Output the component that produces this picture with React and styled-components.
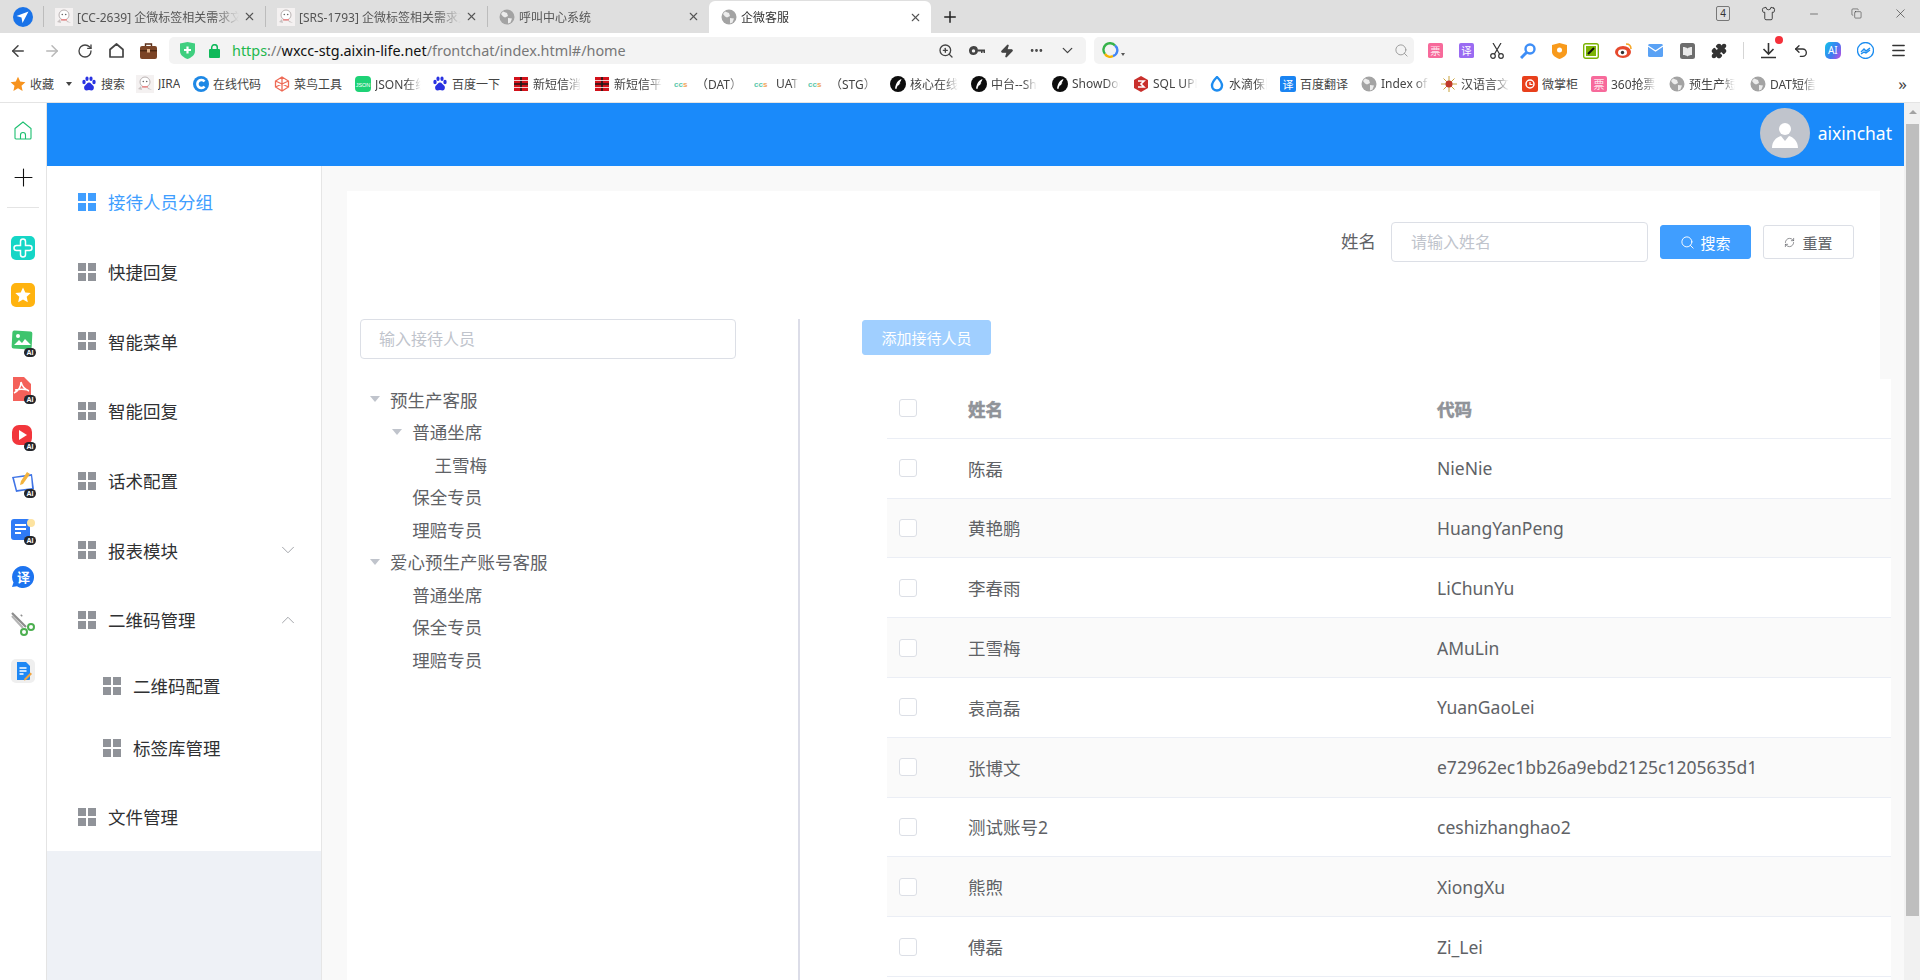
import React from "react";
import styled, { createGlobalStyle } from "styled-components";
import {
  ArrowLeft,
  ArrowRight,
  RotateCw,
  Plus,
  X,
  ZoomIn,
  Zap,
  Ellipsis,
  ChevronDown,
  ChevronUp,
  Search,
  RefreshCw,
  Puzzle,
  Undo2,
  Menu,
  Minus,
  Copy,
  Shirt,
} from "lucide-react";

const sans = `"Noto Sans", "Noto Sans CJK SC", sans-serif`;

const GlobalStyle = createGlobalStyle`
  html, body {
    margin: 0;
    padding: 0;
    height: 980px;
    overflow: hidden;
    background: #fff;
    font-family: ${sans};
  }
  * { box-sizing: border-box; }
`;

/* ---------- small drawings used by the browser chrome ---------- */

const Globe = () => (
  <svg width="16" height="16" viewBox="0 0 16 16">
    <circle cx="8" cy="8" r="7.5" fill="#a3a3a3" />
    <path d="M4 2.5l4 1.5 1 3-3 1.5-2-1L2 5zM9 9l4 .5-1.5 4-2.5 1z" fill="#ececec" />
  </svg>
);

const Bird = () => (
  <svg width="18" height="18" viewBox="0 0 18 18">
    <rect width="18" height="18" fill="#f4f1f1" />
    <ellipse cx="9" cy="7" rx="5" ry="5" fill="#fff" stroke="#b9b2b2" />
    <path d="M5 11l-3 3 4 1zM11 12l5 3-4-1z" fill="#c9c2c2" />
    <rect x="6" y="11" width="6" height="1.6" fill="#e78d8d" />
    <circle cx="7.3" cy="6.5" r=".8" fill="#666" />
    <circle cx="10.7" cy="6.5" r=".8" fill="#666" />
  </svg>
);

const Baidu = () => (
  <svg width="16" height="16" viewBox="0 0 16 16" fill="#2932e1">
    <ellipse cx="3" cy="6" rx="1.7" ry="2.2" />
    <ellipse cx="6" cy="2.8" rx="1.6" ry="2.2" />
    <ellipse cx="10" cy="2.8" rx="1.6" ry="2.2" />
    <ellipse cx="13" cy="6" rx="1.7" ry="2.2" />
    <path d="M8 6.5c2 0 2.5 2 4 3 1.6 1.2 1 5-1.5 5-1 0-1.6-.4-2.5-.4s-1.500.4-2.500.4C3 14.500 2.400 10.700 4 9.500c1.500-1 2-3 4-3z" />
  </svg>
);

const CodeC = () => (
  <svg width="16" height="16" viewBox="0 0 16 16">
    <circle cx="8" cy="8" r="8" fill="#1e88e5" />
    <path d="M11.500 5.500A4 4 0 1 0 11.500 10.500" fill="none" stroke="#fff" strokeWidth="2.600" />
  </svg>
);

const Runoob = () => (
  <svg width="16" height="16" viewBox="0 0 16 16" fill="none" stroke="#ee6a55" strokeWidth="1.300">
    <path d="M8 1l6.500 4v6L8 15l-6.500-4V5zM8 1v14M1.500 5l13 6M14.500 5l-13 6" />
  </svg>
);

const Json = () => (
  <svg width="16" height="16" viewBox="0 0 16 16">
    <rect width="16" height="16" rx="4" fill="#1ed276" />
    <text x="8" y="10.500" fontSize="5.500" fill="#fff" textAnchor="middle" fontFamily="Liberation Sans">JSON</text>
  </svg>
);

const Sms = () => (
  <svg width="16" height="16" viewBox="0 0 16 16">
    <rect x="1" y="1" width="14" height="14" fill="#d2121b" />
    <path d="M1 8h14M8 1v14" stroke="#1b1b1b" strokeWidth="1.600" />
    <path d="M1 4.500h14M1 11.500h14" stroke="#fff" strokeWidth=".8" />
  </svg>
);

const Ccs = () => (
  <svg width="18" height="10" viewBox="0 0 18 10">
    <text x="0" y="8" fontSize="8" fontWeight="700" fill="#5cc8ab" fontFamily="Liberation Sans">cc</text>
    <text x="9" y="8" fontSize="8" fontWeight="700" fill="#f0a55a" fontFamily="Liberation Sans">s</text>
  </svg>
);

const Quill = () => (
  <svg width="16" height="16" viewBox="0 0 16 16">
    <circle cx="8" cy="8" r="8" fill="#0d0d0d" />
    <path d="M11.500 3C8 4 6 7 5 12.500l1.400.4c.3-1.400.8-2.600 1.400-3.400l2-.8-1-.5 1.700-1.200-.8-.5C10.600 5.500 11.200 4.400 11.500 3z" fill="#fff" />
  </svg>
);

const SqlUp = () => (
  <svg width="16" height="16" viewBox="0 0 16 16">
    <path d="M8 0l7 4v8l-7 4-7-4V4z" fill="#c9302c" />
    <path d="M5 5h6l-3 3 3 3H5" fill="none" stroke="#fff" strokeWidth="1.600" />
  </svg>
);

const Drop = () => (
  <svg width="16" height="16" viewBox="0 0 16 16">
    <path d="M8 1c3 3 5 5.500 5 8.500a5 5 0 0 1-10 0C3 6.500 5 4 8 1z" fill="none" stroke="#1d8cf0" strokeWidth="2.400" />
  </svg>
);

const Fanyi = ({ bg = "#1a84f2", r = 2, size = 16 }) => (
  <svg width={size} height={size} viewBox="0 0 16 16">
    <rect width="16" height="16" rx={r} fill={bg} />
    <text x="8" y="12.500" fontSize="11" fill="#fff" textAnchor="middle" fontFamily="Noto Sans CJK SC">译</text>
  </svg>
);

const Piao = ({ size = 16 }) => (
  <svg width={size} height={size} viewBox="0 0 16 16">
    <rect width="16" height="16" rx="2" fill="#f76a9b" />
    <text x="8" y="12.500" fontSize="11" fill="#fff" fillOpacity=".85" textAnchor="middle" fontFamily="Noto Sans CJK SC">票</text>
  </svg>
);

const Burst = () => (
  <svg width="16" height="16" viewBox="0 0 16 16">
    <path d="M8 0v16M0 8h16M2.500 2.500l11 11M13.500 2.500l-11 11" stroke="#c9a23a" strokeWidth="1" />
    <circle cx="8" cy="8" r="3.500" fill="#c0392b" />
  </svg>
);

const Zhanggui = () => (
  <svg width="16" height="16" viewBox="0 0 16 16">
    <rect width="16" height="16" rx="2" fill="#e8401c" />
    <circle cx="8" cy="8" r="4" fill="none" stroke="#fff" strokeWidth="1.500" />
    <path d="M8 6v2.500h2.500" fill="none" stroke="#fff" strokeWidth="1.200" />
  </svg>
);

function StarIcon() {
  return (
    <svg width="16" height="16" viewBox="0 0 16 16">
      <path d="M8 .8l2.200 4.800 5.200.6-3.900 3.500 1.100 5.200L8 12.300 3.400 14.900l1.100-5.200L.6 6.200l5.200-.6z" fill="#f7931e" />
    </svg>
  );
}

const bookmarks = [
  { w: 71, label: "收藏", icon: <StarIcon />, caret: true },
  { w: 55, label: "搜索", icon: <Baidu /> },
  { w: 57, label: "JIRA", icon: <Bird /> },
  { w: 81, label: "在线代码", icon: <CodeC /> },
  { w: 81, label: "菜鸟工具", icon: <Runoob /> },
  { w: 77, label: "JSON在线", icon: <Json />, fade: 46 },
  { w: 81, label: "百度一下", icon: <Baidu /> },
  { w: 81, label: "新短信消息", icon: <Sms />, fade: 48 },
  { w: 80, label: "新短信平台", icon: <Sms />, fade: 48 },
  { w: 80, label: "（DAT）", icon: <Ccs />, fade: 56 },
  { w: 54, label: "UAT", icon: <Ccs />, fade: 26 },
  { w: 82, label: "（STG）", icon: <Ccs />, fade: 56 },
  { w: 81, label: "核心在线", icon: <Quill />, fade: 48 },
  { w: 81, label: "中台--ShowDoc", icon: <Quill />, fade: 46 },
  { w: 81, label: "ShowDoc", icon: <Quill />, fade: 48 },
  { w: 76, label: "SQL UPDATE", icon: <SqlUp />, fade: 44 },
  { w: 71, label: "水滴保险", icon: <Drop />, fade: 38 },
  { w: 81, label: "百度翻译", icon: <Fanyi /> },
  { w: 80, label: "Index of /", icon: <Globe />, fade: 48 },
  { w: 81, label: "汉语言文字", icon: <Burst />, fade: 48 },
  { w: 69, label: "微掌柜", icon: <Zhanggui /> },
  { w: 78, label: "360抢票", icon: <Piao />, fade: 46 },
  { w: 81, label: "预生产短信", icon: <Globe />, fade: 46 },
  { w: 80, label: "DAT短信", icon: <Globe />, fade: 46 },
];

const tabs = [
  { title: "[CC-2639] 企微标签相关需求文档", icon: <Bird /> },
  { title: "[SRS-1793] 企微标签相关需求文档", icon: <Bird /> },
  { title: "呼叫中心系统", icon: <Globe /> },
  { title: "企微客服", icon: <Globe />, active: true },
];

/* ---------- rail apps ---------- */

const AppTile = ({ bg, children }) => (
  <svg width="24" height="24" viewBox="0 0 24 24">
    <rect width="24" height="24" rx="5" fill={bg} />
    {children}
  </svg>
);

const railApps = [
  {
    key: "cross",
    node: (
      <AppTile bg="#15d6c6">
        <path d="M9.500 5.500a2.500 2.500 0 0 1 5 0V9.500h4a2.500 2.500 0 0 1 0 5H14.500v4a2.500 2.500 0 0 1-5 0V14.500h-4a2.500 2.500 0 0 1 0-5H9.500z" fill="none" stroke="#fff" strokeWidth="1.500" />
      </AppTile>
    ),
  },
  {
    key: "star",
    node: (
      <AppTile bg="#ffb30f">
        <path d="M12 4.500l2.300 5 5.400.6-4 3.700 1.100 5.400L12 16.500l-4.800 2.700 1.100-5.400-4-3.700 5.400-.6z" fill="#fff" />
      </AppTile>
    ),
  },
  {
    key: "image",
    ai: true,
    node: (
      <svg width="24" height="24" viewBox="0 0 24 24">
        <rect x="1" y="1" width="20" height="18" rx="2" fill="#3ec46d" transform="rotate(3 11 10)" />
        <circle cx="7" cy="6" r="2" fill="#fff" />
        <path d="M3 15l5-5 3 3 3-4 6 6z" fill="#fff" />
      </svg>
    ),
  },
  {
    key: "pdf",
    ai: true,
    node: (
      <svg width="24" height="24" viewBox="0 0 24 24">
        <path d="M2 0h11l7 7v15a2 2 0 0 1-2 2H2z" fill="#f4615a" />
        <path d="M10 5c1 4 3 7 8 9M10 5c0 5-3 9-7 11M4 13c4-1 9-1 13 0" fill="none" stroke="#fff" strokeWidth="1.500" />
      </svg>
    ),
  },
  {
    key: "video",
    ai: true,
    node: (
      <svg width="24" height="24" viewBox="0 0 24 24">
        <rect x="1" y="1" width="20" height="20" rx="7" fill="#f2363c" />
        <path d="M8 6l8 5-8 5z" fill="#fff" />
      </svg>
    ),
  },
  {
    key: "note",
    ai: true,
    node: (
      <svg width="24" height="24" viewBox="0 0 24 24">
        <path d="M1 6l20-3 2 15-18 3z" fill="#3f74e6" />
        <path d="M3 7l17-2 1 12-15 2z" fill="#fff" />
        <path d="M16 1l3 2-7 10-3 1 1-4z" fill="#f3b33c" />
      </svg>
    ),
  },
  {
    key: "doc",
    ai: true,
    node: (
      <svg width="24" height="24" viewBox="0 0 24 24">
        <rect x="0" y="1" width="19" height="21" rx="3" fill="#2f7bf6" />
        <path d="M4 7h11M4 11h11M4 15h6" stroke="#fff" strokeWidth="1.800" />
        <circle cx="20" cy="5" r="4" fill="#fde3a0" />
      </svg>
    ),
  },
  {
    key: "translate",
    node: (
      <svg width="24" height="24" viewBox="0 0 24 24">
        <path d="M12 1a11 11 0 1 1-6 20.200L1 22l1.500-4.500A11 11 0 0 1 12 1z" fill="#1d74f0" />
        <text x="12.500" y="17" fontSize="13" fontWeight="700" fill="#fff" textAnchor="middle" fontFamily="Noto Sans CJK SC">译</text>
      </svg>
    ),
  },
  {
    key: "scissors",
    node: (
      <svg width="24" height="24" viewBox="0 0 24 24">
        <path d="M1 1l14 14M11 3l-1 1" stroke="#8d8d8d" strokeWidth="2.200" />
        <path d="M1 4l11 12" stroke="#b5b5b5" strokeWidth="2.200" />
        <circle cx="13" cy="20" r="3" fill="none" stroke="#4caf50" strokeWidth="2" />
        <circle cx="20" cy="15" r="3" fill="none" stroke="#4caf50" strokeWidth="2" />
      </svg>
    ),
  },
  {
    key: "edit",
    node: (
      <AppTile bg="#efefef">
        <path d="M6 3h9l4 4v13a1 1 0 0 1-1 1H6z" fill="#1e88f5" />
        <path d="M8.500 9h7M8.500 12h7M8.500 15h4" stroke="#fff" strokeWidth="1.300" />
        <path d="M21 15l-6 6-2 .5.500-2 6-6z" fill="#f2a33c" />
      </AppTile>
    ),
  },
];

/* ---------- page data ---------- */

const menu = [
  { label: "接待人员分组", active: true },
  { label: "快捷回复" },
  { label: "智能菜单" },
  { label: "智能回复" },
  { label: "话术配置" },
  { label: "报表模块", arrow: "down" },
  { label: "二维码管理", arrow: "up" },
];

const tree = [
  { label: "预生产客服", level: 0, open: true },
  { label: "普通坐席", level: 1, open: true },
  { label: "王雪梅", level: 2 },
  { label: "保全专员", level: 1 },
  { label: "理赔专员", level: 1 },
  { label: "爱心预生产账号客服", level: 0, open: true },
  { label: "普通坐席", level: 1 },
  { label: "保全专员", level: 1 },
  { label: "理赔专员", level: 1 },
];

const people = [
  ["陈磊", "NieNie"],
  ["黄艳鹏", "HuangYanPeng"],
  ["李春雨", "LiChunYu"],
  ["王雪梅", "AMuLin"],
  ["袁高磊", "YuanGaoLei"],
  ["张博文", "e72962ec1bb26a9ebd2125c1205635d1"],
  ["测试账号2", "ceshizhanghao2"],
  ["熊煦", "XiongXu"],
  ["傅磊", "Zi_Lei"],
];

const App = () => {
  return (
    <Page>
      <GlobalStyle />
      <TabStrip>
        <Logo>
          <svg width="20" height="20" viewBox="0 0 20 20">
            <circle cx="10" cy="10" r="10" fill="#1a73e8" />
            <path d="M15.500 4.500L9.500 16l-1-5.500L3.500 9z" fill="#fff" />
          </svg>
        </Logo>
        {tabs.map((t) => (
          <Tab key={t.title} $active={t.active}>
            {t.icon}
            <TabTitle $active={t.active}>{t.title}</TabTitle>
            <X size={13} strokeWidth={2} color="#555" />
          </Tab>
        ))}
        <NewTab>
          <Plus size={18} strokeWidth={2} color="#222" />
        </NewTab>
        <WindowBtns>
          <CountBox>4</CountBox>
          <Shirt size={15} strokeWidth={1.3} color="#222" />
          <Minus size={12} strokeWidth={1.2} color="#333" />
          <Copy size={11} strokeWidth={1.2} color="#333" />
          <X size={15} strokeWidth={1} color="#333" />
        </WindowBtns>
      </TabStrip>

      <AddressRow>
        <NavBtns>
          <ArrowLeft size={18} strokeWidth={2} color="#444" />
          <ArrowRight size={18} strokeWidth={2} color="#b8b8b8" />
          <RotateCw size={16} strokeWidth={2} color="#444" />
          <svg width="15" height="15" viewBox="0 0 15 15" fill="none" stroke="#444" strokeWidth="1.700">
            <path d="M1 6.500L7.500 1 14 6.500V14H1z" strokeLinejoin="round" />
          </svg>
          <svg width="17" height="16" viewBox="0 0 17 16">
            <rect x="0" y="3" width="17" height="13" rx="2" fill="#7b4426" />
            <path d="M5.500 3V1h6v2" fill="none" stroke="#5b2f18" strokeWidth="1.400" />
            <rect x="0" y="7" width="17" height="1.400" fill="#4d2813" />
            <rect x="7" y="6" width="3" height="3.500" fill="#e2b48c" />
          </svg>
        </NavBtns>
        <UrlField>
          <svg width="15" height="17" viewBox="0 0 15 17">
            <path d="M0 1.500L7.500 0 15 1.500V9c0 4-3.500 6.500-7.500 8C3.500 15.500 0 13 0 9z" fill="#3fcf7f" />
            <path d="M7.500 4.500v7M4 8h7" stroke="#fff" strokeWidth="2.200" />
          </svg>
          <LockIcon width="11" height="14" viewBox="0 0 11 14">
            <rect y="5" width="11" height="9" rx="1" fill="#0fb95a" />
            <path d="M2.700 5.500V3.500a2.800 2.800 0 0 1 5.600 0v2" fill="none" stroke="#0fb95a" strokeWidth="1.500" />
          </LockIcon>
          <UrlText>
            <UrlScheme>https</UrlScheme>
            <UrlDim>://</UrlDim>
            <UrlHost>wxcc-stg.aixin-life.net</UrlHost>
            <UrlDim>/frontchat/index.html#/home</UrlDim>
          </UrlText>
          <UrlTools>
            <ZoomIn size={16} strokeWidth={2} color="#444" />
            <svg width="16" height="10" viewBox="0 0 16 10" fill="#444">
              <path d="M4.500 0a4.500 4.500 0 1 1-4.500 5A4.500 4.500 0 0 1 4.500 0zm0 3.200a1.600 1.600 0 1 0 0 3.400 1.600 1.600 0 0 0 0-3.400z" fillRule="evenodd" />
              <path d="M8.500 3.500H16V7h-1.500V5.500h-1V7H12V5.500H8.500z" />
            </svg>
            <Zap size={14} strokeWidth={2} color="#444" fill="#444" />
            <Ellipsis size={15} strokeWidth={2.500} color="#444" />
            <ChevronDown size={17} strokeWidth={1.800} color="#444" />
          </UrlTools>
        </UrlField>
        <SearchField>
          <svg width="17" height="17" viewBox="0 0 17 17">
            <path d="M13 3.500A6 6 0 0 0 3 12" fill="none" stroke="#36b24a" strokeWidth="2.400" />
            <path d="M3 12a6 6 0 0 0 8 2" fill="none" stroke="#f4b400" strokeWidth="2.400" />
            <path d="M11 14a6 6 0 0 0 2-10.500" fill="none" stroke="#4285f4" strokeWidth="2.400" />
          </svg>
          <MiniCaret />
          <Search size={15} strokeWidth={1.500} color="#999" />
        </SearchField>
        <Extensions>
          <Piao size={15} />
          <Fanyi bg="#9a6bf2" size={15} />
          <svg width="14" height="16" viewBox="0 0 14 16" fill="none" stroke="#333" strokeWidth="1.200">
            <path d="M3 0l6.500 11M11 0L4.500 11" />
            <circle cx="3" cy="13" r="2.300" />
            <circle cx="11" cy="13" r="2.300" />
          </svg>
          <svg width="16" height="16" viewBox="0 0 16 16" fill="none" stroke="#3e8ef7" strokeWidth="2.400">
            <circle cx="10" cy="6" r="4.500" />
            <path d="M6.500 9.500L1 15" strokeWidth="3" />
          </svg>
          <svg width="15" height="16" viewBox="0 0 15 16">
            <path d="M0 2l7.500-2L15 2v7c0 3.500-3.500 5.500-7.500 7C3.500 14.500 0 12.500 0 9z" fill="#f89a1c" />
            <circle cx="7.500" cy="7" r="2.500" fill="#fff" />
          </svg>
          <svg width="16" height="16" viewBox="0 0 16 16">
            <rect x=".7" y=".7" width="14.600" height="14.600" rx="2" fill="#fff" stroke="#7cb305" strokeWidth="1.400" />
            <rect x="3" y="3" width="10" height="10" fill="#7cb305" />
            <path d="M5 11l6-6" stroke="#111" strokeWidth="2" />
          </svg>
          <svg width="17" height="15" viewBox="0 0 17 15">
            <ellipse cx="8" cy="9" rx="8" ry="6" fill="#e6492d" />
            <ellipse cx="7.500" cy="9.500" rx="4.500" ry="3.200" fill="#fff" />
            <circle cx="7.500" cy="9.500" r="1.700" fill="#333" />
            <path d="M11 1c3 0 5 2 5 5" fill="none" stroke="#f5a623" strokeWidth="1.500" />
          </svg>
          <svg width="15" height="13" viewBox="0 0 15 13">
            <rect width="15" height="13" rx="1.500" fill="#5aa2f5" />
            <path d="M0 2l7.500 5L15 2" fill="none" stroke="#fff" strokeWidth="1.200" />
          </svg>
          <svg width="15" height="16" viewBox="0 0 15 16">
            <rect width="15" height="16" rx="2.500" fill="#6d6d6d" />
            <path d="M3 4c2 0 3.500.5 4.500 1.500C8.500 4.500 10 4 12 4v8c-2 0-3.500.5-4.500 1.500C6.500 12.500 5 12 3 12z" fill="#e9e9e9" />
          </svg>
          <Puzzle size={16} strokeWidth={2} color="#333" fill="#333" />
          <ExtSep />
          <DownloadWrap>
            <svg width="17" height="17" viewBox="0 0 17 17" fill="none" stroke="#333" strokeWidth="1.600">
              <path d="M8.500 1v10M3.500 7l5 5 5-5M1 15.500h15" />
            </svg>
            <RedDot />
          </DownloadWrap>
          <Undo2 size={16} strokeWidth={2} color="#333" />
          <AiIcon>AI</AiIcon>
          <svg width="17" height="17" viewBox="0 0 17 17">
            <circle cx="8.500" cy="8.500" r="8" fill="#fff" stroke="#1a8cf0" strokeWidth="1.300" />
            <path d="M4 10l3-3 2 2 4-3M4 12l3-2 2 1 4-3" fill="none" stroke="#1a8cf0" strokeWidth="1.400" />
          </svg>
          <Menu size={17} strokeWidth={2} color="#333" />
        </Extensions>
      </AddressRow>

      <BookmarkBar>
        {bookmarks.map((b) => (
          <Bookmark key={b.label + b.w} $w={b.w}>
            {b.icon}
            <BookmarkText $fade={b.fade}>{b.label}</BookmarkText>
            {b.caret && <BmCaret />}
          </Bookmark>
        ))}
        <More>»</More>
      </BookmarkBar>

      <Workspace>
        <Rail>
          <RailSlot>
            <svg width="18" height="19" viewBox="0 0 18 19" fill="none" stroke="#1cbf70" strokeWidth="1.100">
              <path d="M1 7.500L9 1l8 6.500V17a1 1 0 0 1-1 1H2a1 1 0 0 1-1-1z" />
              <path d="M6.500 18v-4a2.500 2.500 0 0 1 5 0v4" />
            </svg>
          </RailSlot>
          <RailSlot>
            <Plus size={29} strokeWidth={0.9} color="#111" />
          </RailSlot>
          <RailDivider />
          {railApps.map((a) => (
            <RailSlot key={a.key}>
              <RailIcon>
                {a.node}
                {a.ai && <AiBadge>AI</AiBadge>}
              </RailIcon>
            </RailSlot>
          ))}
        </Rail>

        <Main>
          <TopBar>
            <Avatar>
              <svg width="30" height="30" viewBox="0 0 30 30" fill="#fff">
                <circle cx="15" cy="9" r="6" />
                <path d="M2 28c0-7 5-11 9-12l4 5 4-5c4 1 9 5 9 12z" />
              </svg>
            </Avatar>
            <UserName>aixinchat</UserName>
          </TopBar>

          <Body>
            <Sidebar>
              <MenuList>
                {menu.map((m) => (
                  <MenuItem key={m.label} $active={m.active}>
                    <GridIcon />
                    <MenuLabel>{m.label}</MenuLabel>
                    {m.arrow === "down" && <ChevronDown size={22} strokeWidth={0.9} color="#909399" />}
                    {m.arrow === "up" && <ChevronUp size={22} strokeWidth={0.9} color="#909399" />}
                  </MenuItem>
                ))}
                <SubItem>
                  <GridIcon />
                  <MenuLabel>二维码配置</MenuLabel>
                </SubItem>
                <SubItem>
                  <GridIcon />
                  <MenuLabel>标签库管理</MenuLabel>
                </SubItem>
                <LastItem>
                  <GridIcon />
                  <MenuLabel>文件管理</MenuLabel>
                </LastItem>
              </MenuList>
            </Sidebar>

            <Content>
              <SearchPanel>
                <FormLabel>姓名</FormLabel>
                <NameInput placeholder="请输入姓名" />
                <PrimaryBtn>
                  <Search size={15} strokeWidth={1.500} />
                  搜索
                </PrimaryBtn>
                <PlainBtn>
                  <RefreshCw size={11} strokeWidth={1.500} />
                  重置
                </PlainBtn>
              </SearchPanel>

              <Split>
                <TreeCol>
                  <TreeInput placeholder="输入接待人员" />
                  <Tree>
                    {tree.map((n, i) => (
                      <TreeRow key={i} $level={n.level}>
                        <Toggle>{n.open && <Triangle />}</Toggle>
                        {n.label}
                      </TreeRow>
                    ))}
                  </Tree>
                </TreeCol>

                <TableCol>
                  <AddBar>
                    <AddBtn>添加接待人员</AddBtn>
                  </AddBar>
                  <TableWrap>
                    <HeadRow>
                      <Checkbox />
                      <div>姓名</div>
                      <div>代码</div>
                    </HeadRow>
                    {people.map(([name, code], i) => (
                      <DataRow key={code} $striped={i % 2 === 1}>
                        <Checkbox />
                        <div>{name}</div>
                        <div>{code}</div>
                      </DataRow>
                    ))}
                  </TableWrap>
                </TableCol>
              </Split>
            </Content>
          </Body>
        </Main>

        <ScrollTrack>
          <ScrollArrow />
          <ScrollThumb />
        </ScrollTrack>
      </Workspace>
    </Page>
  );
};

export default App;

const GridIcon = () => (
  <GridSvg width="18" height="18" viewBox="0 0 18 18">
    <rect width="8" height="8" />
    <rect x="10" width="8" height="8" />
    <rect y="10" width="8" height="8" />
    <rect x="10" y="10" width="8" height="8" />
  </GridSvg>
);

const Page = styled.div`
  width: 1920px;
  height: 980px;
  display: flex;
  flex-direction: column;
  overflow: hidden;
  color: #303133;
`;

/* tab strip */
const TabStrip = styled.div`
  height: 33px;
  flex: none;
  display: flex;
  align-items: stretch;
  background: #dfdfdf;
  position: relative;
`;

const Logo = styled.div`
  width: 43px;
  display: flex;
  align-items: center;
  justify-content: center;
  padding-left: 3px;
`;

const Tab = styled.div`
  width: 222px;
  display: flex;
  align-items: center;
  gap: 4px;
  padding: 0 9px 0 12px;
  background: ${(p) => (p.$active ? "#fff" : "transparent")};
  border-radius: ${(p) => (p.$active ? "6px 6px 0 0" : "0")};
  margin-top: ${(p) => (p.$active ? "1px" : "0")};
  position: relative;
  &::before {
    content: "";
    position: absolute;
    left: 0;
    top: 6px;
    bottom: 6px;
    width: 1px;
    background: ${(p) => (p.$active ? "transparent" : "#bcbcbc")};
  }
  svg:first-child {
    flex: none;
  }
`;

const TabTitle = styled.div`
  flex: 1;
  min-width: 0;
  white-space: nowrap;
  overflow: hidden;
  font-size: 12px;
  color: ${(p) => (p.$active ? "#333" : "#555")};
  -webkit-mask-image: linear-gradient(to right, #000 85%, transparent 100%);
  mask-image: linear-gradient(to right, #000 85%, transparent 100%);
`;

const NewTab = styled.div`
  width: 38px;
  display: flex;
  align-items: center;
  justify-content: center;
`;

const WindowBtns = styled.div`
  margin-left: auto;
  width: 210px;
  padding: 0 12px 6px 6px;
  display: flex;
  align-items: center;
  justify-content: space-between;
`;

const CountBox = styled.div`
  width: 14px;
  height: 15px;
  border: 1px solid #777;
  border-radius: 2px;
  font-size: 10px;
  line-height: 13px;
  text-align: center;
  color: #333;
`;

/* address row */
const AddressRow = styled.div`
  height: 32px;
  flex: none;
  display: flex;
  align-items: center;
  background: #fff;
  padding-top: 3px;
`;

const NavBtns = styled.div`
  width: 169px;
  padding: 0 12px 0 9px;
  display: flex;
  align-items: center;
  justify-content: space-between;
`;

const UrlField = styled.div`
  width: 917px;
  height: 27px;
  background: #f3f3f3;
  border-radius: 5px;
  display: flex;
  align-items: center;
  padding: 0 10px 0 11px;
`;

const LockIcon = styled.svg`
  margin-left: 14px;
  flex: none;
`;

const UrlText = styled.div`
  margin-left: 12px;
  font-size: 14.4px;
  white-space: nowrap;
`;

const UrlScheme = styled.span`
  color: #22b84d;
`;
const UrlDim = styled.span`
  color: #777;
`;
const UrlHost = styled.span`
  color: #111;
`;

const UrlTools = styled.div`
  margin-left: auto;
  width: 138px;
  display: flex;
  align-items: center;
  justify-content: space-between;
`;

const SearchField = styled.div`
  width: 320px;
  height: 27px;
  margin-left: 8px;
  background: #f3f3f3;
  border-radius: 5px;
  display: flex;
  align-items: center;
  padding: 0 5px 0 8px;
  svg:last-child {
    margin-left: auto;
  }
`;

const MiniCaret = styled.div`
  margin: 7px 0 0 2px;
  border-left: 2px solid transparent;
  border-right: 2px solid transparent;
  border-top: 3px solid #555;
`;

const Extensions = styled.div`
  flex: 1;
  display: flex;
  align-items: center;
  justify-content: space-between;
  padding: 0 13px 0 14px;
`;

const ExtSep = styled.div`
  width: 1px;
  height: 17px;
  background: #d5d5d5;
`;

const DownloadWrap = styled.div`
  position: relative;
  display: flex;
`;

const RedDot = styled.div`
  position: absolute;
  top: -6px;
  right: -6px;
  width: 8px;
  height: 8px;
  border-radius: 50%;
  background: #f5303a;
`;

const AiIcon = styled.div`
  width: 16px;
  height: 17px;
  border-radius: 5px;
  background: linear-gradient(120deg, #13c6e8, #3d7bf2 55%, #c44be0);
  color: #fff;
  font-size: 10px;
  line-height: 17px;
  text-align: center;
`;

/* bookmarks */
const BookmarkBar = styled.div`
  height: 38px;
  flex: none;
  display: flex;
  align-items: center;
  padding-left: 10px;
  background: #fff;
  border-bottom: 1px solid #e4e4e4;
`;

const Bookmark = styled.div`
  width: ${(p) => p.$w}px;
  flex: none;
  display: flex;
  align-items: center;
  gap: 4px;
  svg {
    flex: none;
  }
`;

const BookmarkText = styled.div`
  white-space: nowrap;
  overflow: hidden;
  font-size: 12px;
  color: #444;
  ${(p) =>
    p.$fade
      ? `max-width: ${p.$fade}px;
         -webkit-mask-image: linear-gradient(to right, #000 70%, transparent 100%);
         mask-image: linear-gradient(to right, #000 70%, transparent 100%);`
      : ""}
`;

const BmCaret = styled.div`
  margin-left: 8px;
  border-left: 3px solid transparent;
  border-right: 3px solid transparent;
  border-top: 4px solid #444;
`;

const More = styled.div`
  margin-left: auto;
  margin-right: 13px;
  font-size: 17px;
  color: #444;
`;

/* workspace */
const Workspace = styled.div`
  flex: 1;
  min-height: 0;
  display: flex;
`;

const Rail = styled.div`
  width: 47px;
  flex: none;
  padding-top: 4px;
  background: #fff;
  border-right: 1px solid #e4e4e4;
`;

const RailSlot = styled.div`
  height: 47px;
  display: flex;
  align-items: center;
  justify-content: center;
`;

const RailIcon = styled.div`
  position: relative;
  width: 24px;
  height: 24px;
`;

const AiBadge = styled.div`
  position: absolute;
  right: -1px;
  bottom: -3px;
  width: 12px;
  height: 9px;
  border-radius: 5px;
  background: #24262b;
  color: #fff;
  font-family: "Liberation Sans", sans-serif;
  font-size: 7px;
  font-weight: 700;
  line-height: 9px;
  text-align: center;
`;

const RailDivider = styled.div`
  height: 1px;
  margin: 6px 7px 16px;
  background: #e4e4e4;
`;

const Main = styled.div`
  flex: 1;
  min-width: 0;
  display: flex;
  flex-direction: column;
`;

const TopBar = styled.div`
  height: 63px;
  flex: none;
  display: flex;
  align-items: center;
  padding: 0 12px 3px 0;
  justify-content: flex-end;
  background: #1a8afa;
`;

const Avatar = styled.div`
  width: 50px;
  height: 50px;
  border-radius: 50%;
  background: #c0c4cc;
  display: flex;
  align-items: flex-end;
  justify-content: center;
  padding-bottom: 8px;
`;

const UserName = styled.div`
  margin-left: 8px;
  color: #fff;
  font-size: 17.5px;
`;

const Body = styled.div`
  flex: 1;
  min-height: 0;
  display: flex;
`;

const Sidebar = styled.div`
  width: 275px;
  flex: none;
  background: #eef1f6;
  border-right: 1px solid #e6e6e6;
`;

const MenuList = styled.div`
  background: #fff;
  padding-top: 1px;
  height: 685px;
`;

const MenuItem = styled.div`
  height: 69.7px;
  display: flex;
  align-items: center;
  padding: 0 22px 0 31px;
  font-size: 17.5px;
  color: ${(p) => (p.$active ? "#409eff" : "#303133")};
  svg:first-child {
    color: ${(p) => (p.$active ? "#409eff" : "#909399")};
  }
`;

const SubItem = styled(MenuItem)`
  height: 62px;
  padding-left: 56px;
`;

const LastItem = styled(MenuItem)`
  margin-top: 3px;
`;

const GridSvg = styled.svg`
  flex: none;
  fill: currentColor;
`;

const MenuLabel = styled.div`
  flex: 1;
  margin-left: 12px;
`;

const Content = styled.div`
  flex: 1;
  min-width: 0;
  padding: 25px 0 0 25px;
  background: #f9f9f9;
`;

const SearchPanel = styled.div`
  width: 1533px;
  height: 128px;
  padding: 31px 26px 0 0;
  display: flex;
  justify-content: flex-end;
  align-items: flex-start;
  background: #fff;
`;

const FormLabel = styled.div`
  margin-right: 15px;
  height: 40px;
  line-height: 38px;
  font-size: 17.5px;
  color: #606266;
`;

const NameInput = styled.input`
  width: 257px;
  height: 40px;
  padding: 0 19px;
  border: 1px solid #dcdfe6;
  border-radius: 4px;
  outline: none;
  font-family: inherit;
  font-size: 16px;
  &::placeholder {
    color: #c0c4cc;
  }
`;

const PrimaryBtn = styled.button`
  width: 91px;
  height: 34px;
  margin: 3px 0 0 12px;
  display: flex;
  align-items: center;
  justify-content: center;
  gap: 5px;
  border: 1px solid #409eff;
  border-radius: 3px;
  background: #409eff;
  color: #fff;
  font-family: inherit;
  font-size: 15px;
`;

const PlainBtn = styled(PrimaryBtn)`
  margin-left: 12px;
  gap: 7px;
  border-color: #dcdfe6;
  background: #fff;
  color: #606266;
`;

const Split = styled.div`
  width: 1544px;
  height: 661px;
  display: flex;
`;

const TreeCol = styled.div`
  width: 453px;
  flex: none;
  padding-left: 13px;
  background: #fff;
  border-right: 2px solid #dcdde8;
`;

const TreeInput = styled.input`
  display: block;
  width: 376px;
  height: 40px;
  padding: 0 18px;
  border: 1px solid #dcdfe6;
  border-radius: 4px;
  outline: none;
  font-family: inherit;
  font-size: 16px;
  &::placeholder {
    color: #c0c4cc;
  }
`;

const Tree = styled.div`
  margin-top: 24px;
`;

const TreeRow = styled.div`
  height: 32.5px;
  display: flex;
  align-items: center;
  padding-left: ${(p) => 10 + p.$level * 22.3}px;
  font-size: 17.5px;
  color: #606266;
`;

const Toggle = styled.div`
  width: 20px;
  flex: none;
`;

const Triangle = styled.div`
  width: 0;
  border-left: 5px solid transparent;
  border-right: 5px solid transparent;
  border-top: 6px solid #c0c4cc;
`;

const TableCol = styled.div`
  flex: 1;
  min-width: 0;
  display: flex;
  flex-direction: column;
`;

const AddBar = styled.div`
  height: 60px;
  flex: none;
  margin-right: 11px;
  padding: 1px 0 0 62px;
  background: #fff;
`;

const AddBtn = styled.button`
  width: 129px;
  height: 35px;
  border: 1px solid #a0cfff;
  border-radius: 3px;
  background: #a0cfff;
  color: #fff;
  font-family: inherit;
  font-size: 15px;
`;

const TableWrap = styled.div`
  flex: 1;
  padding-left: 87px;
  background: #fff;
  overflow: hidden;
`;

const HeadRow = styled.div`
  height: 59.8px;
  display: grid;
  grid-template-columns: 81px 469px 1fr;
  align-items: center;
  border-bottom: 1px solid #ebeef5;
  font-size: 17.5px;
  font-weight: 700;
  -webkit-text-stroke: 0.6px #909399;
  color: #909399;
`;

const DataRow = styled(HeadRow)`
  font-weight: 400;
  -webkit-text-stroke: 0;
  color: #606266;
  background: ${(p) => (p.$striped ? "#fafafa" : "#fff")};
`;

const Checkbox = styled.div`
  width: 18px;
  height: 18px;
  margin-left: 12px;
  border: 1px solid #dcdfe6;
  border-radius: 3px;
  background: #fff;
`;

/* scrollbar */
const ScrollTrack = styled.div`
  width: 16px;
  flex: none;
  padding-left: 2px;
  background: #f1f1f1;
`;

const ScrollArrow = styled.div`
  width: 0;
  margin: 7px 0 0 3px;
  border-left: 4px solid transparent;
  border-right: 4px solid transparent;
  border-bottom: 4px solid #a3a3a3;
`;

const ScrollThumb = styled.div`
  width: 13px;
  height: 792px;
  margin-top: 10px;
  background: #bebebe;
`;
